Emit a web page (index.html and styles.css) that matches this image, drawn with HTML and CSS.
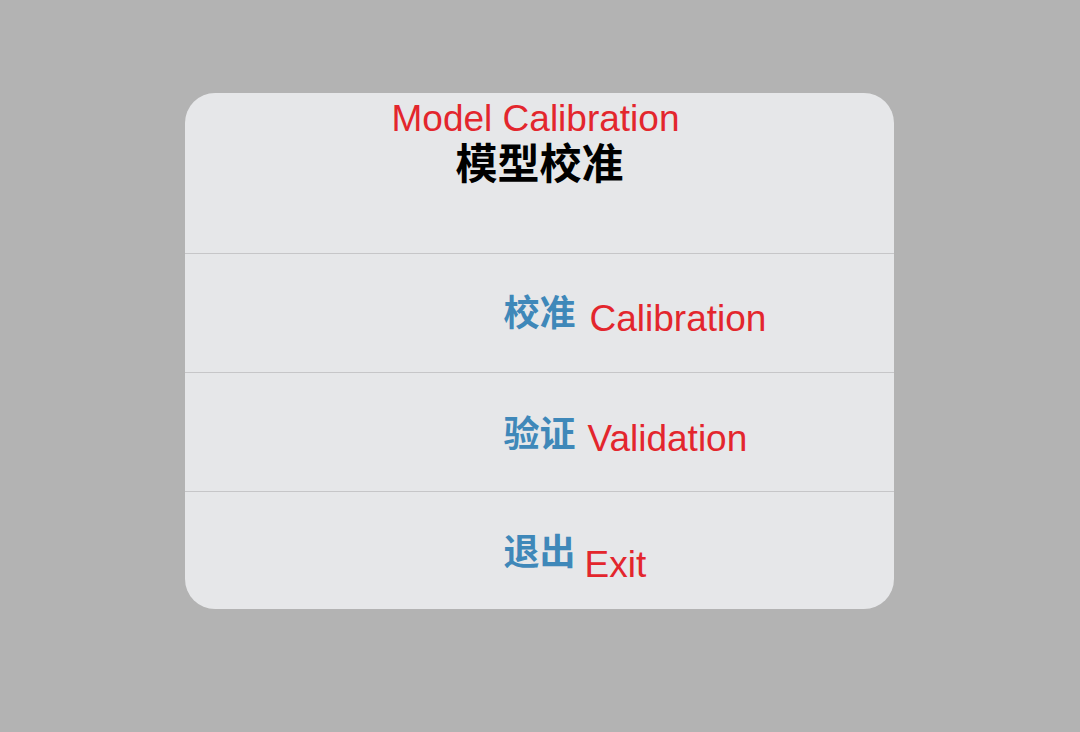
FILE: index.html
```html
<!DOCTYPE html>
<html lang="zh">
<head>
<meta charset="utf-8">
<title>Model Calibration</title>
<link rel="stylesheet" href="styles.css">
</head>
<body>
<div class="dialog">
  <div class="header">
    <div class="title-en">Model Calibration</div>
    <div class="title-zh">模型校准</div>
  </div>
  <div class="row row-cal">
    <span class="spacer"></span>
    <span class="zh">校准</span>
    <span class="en">Calibration</span>
  </div>
  <div class="row row-val">
    <span class="spacer"></span>
    <span class="zh">验证</span>
    <span class="en">Validation</span>
  </div>
  <div class="row row-exit">
    <span class="spacer"></span>
    <span class="zh">退出</span>
    <span class="en">Exit</span>
  </div>
</div>
</body>
</html>
```

FILE: styles.css
```css
html, body {
  margin: 0;
  padding: 0;
}
body {
  background: #b3b3b3;
  width: 1080px;
  height: 732px;
  overflow: hidden;
  font-family: "Liberation Sans", Arial, "Noto Sans CJK SC", sans-serif;
}
.dialog {
  width: 709px;
  height: 516px;
  margin: 93px 0 0 185px;
  background: #e6e7e9;
  border-radius: 30px;
  overflow: hidden;
  box-sizing: border-box;
}
.header {
  height: 160px;
  box-sizing: border-box;
  padding-top: 7px;
  text-align: center;
}
.title-en {
  color: #e3262d;
  font-size: 37px;
  line-height: 37px;
  margin-left: -8px;
}
.title-zh {
  color: #000;
  font-family: "Noto Sans CJK SC", sans-serif;
  font-weight: bold;
  font-size: 42px;
  line-height: 42px;
  margin-top: 3px;
}
.row {
  height: 119px;
  box-sizing: border-box;
  border-top: 1px solid #c6c6c8;
  display: grid;
  grid-template-columns: 1fr auto 1fr;
  align-items: start;
}
.zh {
  color: #3f88b9;
  font-family: "Noto Sans CJK SC", sans-serif;
  font-weight: bold;
  font-size: 36px;
  line-height: 36px;
}
.en {
  color: #e3262d;
  font-size: 37px;
  line-height: 37px;
  white-space: nowrap;
}
.row-cal .zh { margin-top: 38px; }
.row-cal .en { margin-top: 46px; margin-left: 14px; }
.row-val .zh { margin-top: 40px; }
.row-val .en { margin-top: 47px; margin-left: 12px; }
.row-exit .zh { margin-top: 39px; }
.row-exit .en { margin-top: 54px; margin-left: 9px; }
```
